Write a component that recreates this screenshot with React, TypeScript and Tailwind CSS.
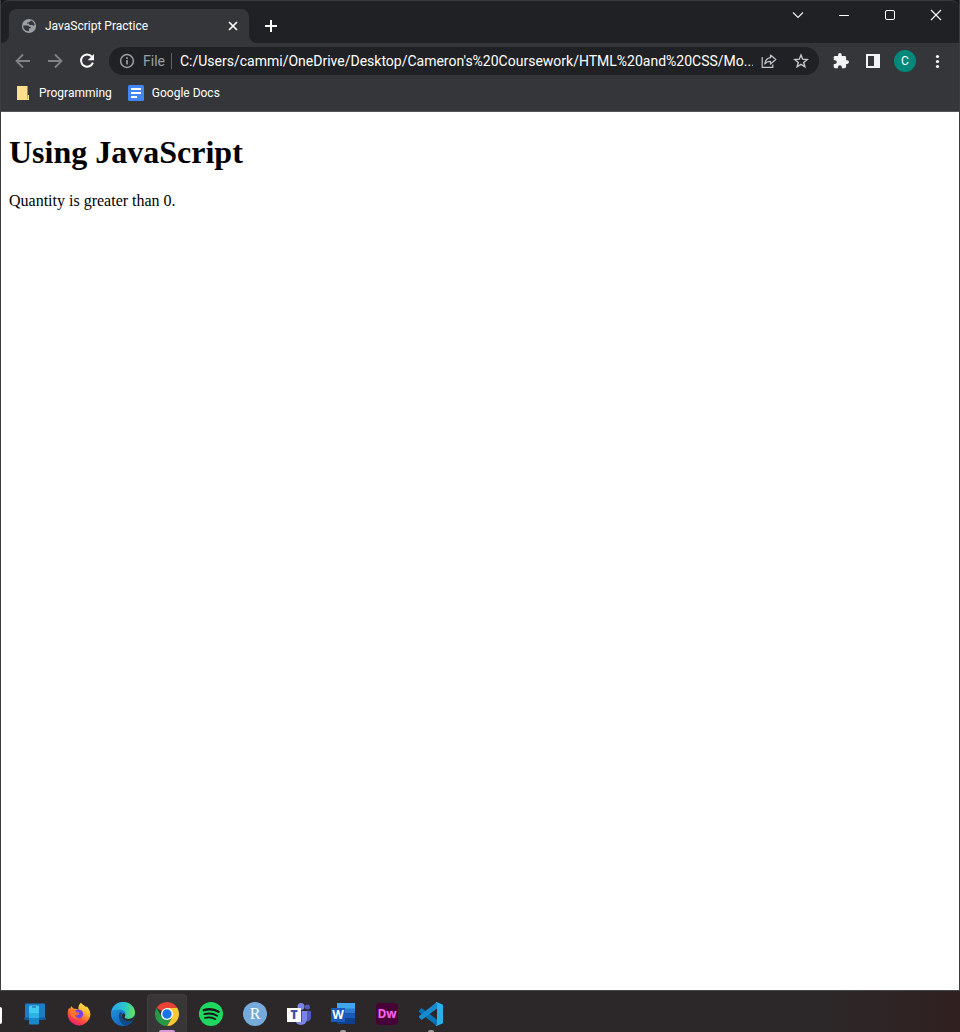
import type { ReactNode } from "react";

function IconButton({ label, className = "w-8 h-8", children }: { label: string; className?: string; children: ReactNode }) {
  return (
    <button type="button" aria-label={label} className={`flex shrink-0 items-center justify-center ${className}`}>
      {children}
    </button>
  );
}

function TabStrip() {
  return (
    <header className="flex h-[43px] items-end rounded-t-lg border-t border-[#3a3b3e] bg-[#202124] text-white">
      <div className="relative ml-2 flex h-[34px] w-60 items-center rounded-t-lg bg-[#35363a] pr-2 pl-3">
        <svg className="absolute bottom-0 -left-2 h-2 w-2" viewBox="0 0 8 8" fill="#35363a">
          <path d="M8 0v8H0a8 8 0 0 0 8-8z" />
        </svg>
        <svg className="absolute -right-2 bottom-0 h-2 w-2" viewBox="0 0 8 8" fill="#35363a">
          <path d="M0 0v8h8a8 8 0 0 1-8-8z" />
        </svg>
        <svg className="h-4 w-4 shrink-0" viewBox="0 0 16 16">
          <circle cx="8" cy="8" r="7.1" fill="#9aa0a6" />
          <path d="M2.300 7.500h3.600c1.300 0 2 .5 2.200 1.300h1.600v1.500H8v2.900C4.500 13.300 1.900 10.800 2.300 7.500z" fill="#35363a" />
          <path d="M10 2.600c2 .8 3.500 2.600 3.700 4.700-.8.6-1.700.5-2.300-.2H9.200C8.300 7 7.800 6.400 7.800 5.600H6V4.400h1.400c1.300-.1 1.700-.8 2.600-1.800z" fill="#35363a" />
        </svg>
        <span className="ml-2 grow truncate text-xs">JavaScript Practice</span>
        <IconButton label="Close tab" className="h-4 w-4">
          <svg className="h-4 w-4" viewBox="0 0 16 16" stroke="#fff" strokeWidth="1.7">
            <path d="M4 4l8 8M12 4l-8 8" />
          </svg>
        </IconButton>
      </div>
      <IconButton label="New tab" className="ml-1.5 h-[34px] w-8">
        <svg className="h-4 w-4" viewBox="0 0 16 16" stroke="#fff" strokeWidth="2">
          <path d="M8 2v12M2 8h12" />
        </svg>
      </IconButton>
      <div className="ml-auto flex self-start">
        <IconButton label="Search tabs" className="h-7 w-[46px]">
          <svg className="h-3 w-3" viewBox="0 0 12 12" fill="none" stroke="#f1f3f4" strokeWidth="1.100">
            <path d="M1 3.500l5 5 5-5" />
          </svg>
        </IconButton>
        <IconButton label="Minimize" className="h-7 w-[46px]">
          <svg className="h-3 w-3" viewBox="0 0 12 12" stroke="#fff">
            <path d="M1 6.500h10" />
          </svg>
        </IconButton>
        <IconButton label="Maximize" className="h-7 w-[46px]">
          <svg className="h-3 w-3" viewBox="0 0 12 12" fill="none" stroke="#fff">
            <rect x="1.500" y="1.500" width="9" height="9" rx="1.500" />
          </svg>
        </IconButton>
        <IconButton label="Close" className="h-7 w-[46px]">
          <svg className="h-3 w-3" viewBox="0 0 12 12" stroke="#fff" strokeWidth="1.100">
            <path d="M1 1l10 10M11 1L1 11" />
          </svg>
        </IconButton>
      </div>
    </header>
  );
}

function Toolbar() {
  return (
    <div className="flex h-9 items-center px-1.5">
      <IconButton label="Back">
        <svg className="h-4 w-4" viewBox="0 0 16 16" fill="none" stroke="#808286" strokeWidth="1.8">
          <path d="M15 8H2M8 1.500L1.500 8 8 14.500" />
        </svg>
      </IconButton>
      <IconButton label="Forward">
        <svg className="h-4 w-4" viewBox="0 0 16 16" fill="none" stroke="#808286" strokeWidth="1.8">
          <path d="M1 8h13M8 1.500L14.500 8 8 14.500" />
        </svg>
      </IconButton>
      <IconButton label="Reload">
        <svg className="h-4 w-4" viewBox="0 0 16 16" fill="none">
          <path d="M12.800 3.600A6.100 6.100 0 1 0 13.900 9.600" stroke="#fff" strokeWidth="2" />
          <path d="M15 1v6.300H8.700z" fill="#fff" />
        </svg>
      </IconButton>
      <div className="mx-1.5 flex h-7 min-w-0 grow items-center rounded-full bg-[#202124] pr-0.5 pl-2.5">
        <svg className="h-4 w-4 shrink-0" viewBox="0 0 16 16" fill="none" stroke="#9aa0a6" strokeWidth="1.500">
          <circle cx="8" cy="8" r="6.400" />
          <path d="M8 7v4.500M8 4.300v1.600" strokeWidth="1.700" />
        </svg>
        <span className="ml-2 w-7 text-sm text-[#9aa0a6]">File</span>
        <span className="h-4 w-px bg-[#5f6368]" />
        <input
          type="text"
          aria-label="Address"
          readOnly
          className="ml-2 min-w-0 grow bg-transparent text-sm text-white outline-none"
          value="C:/Users/cammi/OneDrive/Desktop/Cameron's%20Coursework/HTML%20and%20CSS/Mo..."
        />
        <IconButton label="Share" className="h-7 w-8">
          <svg className="h-4 w-4" viewBox="0 0 16 16" fill="none" stroke="#c4c7cb" strokeWidth="1.200" strokeLinejoin="round">
            <path d="M1.200 4v10.400h10.600V11.500" />
            <path d="M9.500 2l5.300 4.500-5.300 4.500V8.300C7 8.200 5.200 9 3.800 11c.4-3.400 2.400-5.800 5.700-6.300z" />
          </svg>
        </IconButton>
        <IconButton label="Bookmark this page" className="h-7 w-8">
          <svg className="h-4 w-4" viewBox="0 0 16 16" fill="none" stroke="#c4c7cb" strokeWidth="1.400">
            <path d="M8 2l1.700 4.200 4.500.3-3.500 2.900 1.200 4.400L8 11.400l-3.900 2.400 1.200-4.400-3.500-2.900 4.500-.3z" />
          </svg>
        </IconButton>
      </div>
      <IconButton label="Extensions">
        <svg className="h-4 w-4" viewBox="1 1 22 22" fill="#f1f3f4">
          <path d="M20.500 11H19V7a2 2 0 0 0-2-2h-4V3.500a2.500 2.500 0 0 0-5 0V5H4a2 2 0 0 0-2 2v3.800h1.500a2.700 2.700 0 0 1 0 5.400H2V20a2 2 0 0 0 2 2h3.800v-1.500a2.700 2.700 0 0 1 5.400 0V22H17a2 2 0 0 0 2-2v-4h1.500a2.500 2.500 0 0 0 0-5z" />
        </svg>
      </IconButton>
      <IconButton label="Side panel">
        <svg className="h-4 w-4" viewBox="0 0 16 16">
          <path d="M1 1h14v14H1zM3 3v10h6V3z" fill="#f1f3f4" fillRule="evenodd" />
        </svg>
      </IconButton>
      <IconButton label="Profile">
        <span className="flex h-[22px] w-[22px] items-center justify-center rounded-full bg-[#00897b] text-xs text-white">C</span>
      </IconButton>
      <IconButton label="Menu">
        <svg className="h-4 w-4" viewBox="0 0 16 16" fill="#fff">
          <circle cx="8.500" cy="3.500" r="1.600" />
          <circle cx="8.500" cy="8.500" r="1.600" />
          <circle cx="8.500" cy="13.500" r="1.600" />
        </svg>
      </IconButton>
    </div>
  );
}

function Bookmarks() {
  return (
    <nav aria-label="Bookmarks" className="flex h-8 items-start gap-4 pt-1 pl-3.5 text-xs leading-5 text-white">
      <a href="#programming" className="flex items-center gap-2">
        <svg className="h-4 w-4" viewBox="0 0 16 16">
          <path d="M2 1h10.500v9H14v5H2z" fill="#ffe08a" />
          <path d="M12.500 10v4" stroke="#d9a93c" fill="none" />
        </svg>
        Programming
      </a>
      <a href="#docs" className="flex items-center gap-2">
        <svg className="h-4 w-4" viewBox="0 0 16 16">
          <rect width="16" height="16" rx="1.500" fill="#4285f4" />
          <path d="M3 4h10M3 8h10M3 12h6" stroke="#fff" strokeWidth="1.900" />
        </svg>
        Google Docs
      </a>
    </nav>
  );
}

function PhoneLinkIcon() {
  return (
    <svg className="h-6 w-6" viewBox="0 0 24 24">
      <rect x="2" y="1.500" width="20" height="15" rx="1" fill="#1c7cc4" />
      <path d="M1 15.500h22V17l-1 1H2l-1-1z" fill="#115c9c" />
      <rect x="6" y="3.500" width="10" height="19" rx="1" fill="#1688cd" />
      <path d="M6 4.500a1 1 0 0 1 1-1h8a1 1 0 0 1 1 1V11H6z" fill="#42caf0" />
      <path d="M6 11h10v5H6z" fill="#2bb1e3" />
      <path d="M9 5h4" stroke="#135b91" />
    </svg>
  );
}

function FirefoxIcon() {
  return (
    <svg className="h-6 w-6" viewBox="0 0 24 24">
      <defs>
        <linearGradient id="fx" x1=".8" y1="0" x2=".25" y2="1">
          <stop offset="0" stopColor="#fff14f" />
          <stop offset=".35" stopColor="#ffb52e" />
          <stop offset=".65" stopColor="#ff5836" />
          <stop offset="1" stopColor="#ee1275" />
        </linearGradient>
      </defs>
      <path d="M14 .7c1 1.800 3.800 2.700 5 4.600l.7-1C22.300 7.300 23.600 10 23.300 13A11.300 11.300 0 0 1 .8 13.300C.4 10.500 1 8.100 2 6l1.100 1L4.300 4l2 2.500c2.500.1 4.300.5 5.400 1.500C10.800 4.800 12 2.300 14 .7z" fill="url(#fx)" />
      <path d="M8 8.500c2-1.500 5-1.500 6.800.2 2.500 2.400 1.700 6.400-1.500 7.400-2.600.8-5.100-.7-5.700-2.800 1.700.6 3.200 0 4.200-1.600-1.700 0-3.200-1.200-3.800-3.200z" fill="#7542e5" />
      <path d="M2.500 9c2-1.500 4.200-1.600 5.900.3 1 1.300 2.600 1 4 1.400-1 2.300-3.100 2.500-4.800 2.400.8 1.800 2.300 2.900 4.600 3C7.500 18 3.500 15 2.500 9z" fill="#ff752b" />
    </svg>
  );
}

function EdgeIcon() {
  return (
    <svg className="h-6 w-6" viewBox="0 0 24 24">
      <defs>
        <linearGradient id="edgeTop" x1="0" y1=".4" x2="1" y2=".5">
          <stop offset="0" stopColor="#2aa4ed" />
          <stop offset=".55" stopColor="#2bc5ca" />
          <stop offset="1" stopColor="#66e35b" />
        </linearGradient>
        <linearGradient id="edgeLeft" x1="0" y1="0" x2=".7" y2="1">
          <stop offset="0" stopColor="#249de5" />
          <stop offset="1" stopColor="#105fb4" />
        </linearGradient>
      </defs>
      <circle cx="12" cy="12" r="12" fill="url(#edgeLeft)" />
      <path d="M.3 9.500C2 3 6.600 0 12 0c7 0 12 5 12 10.500 0 4-3 6.500-6.600 6.500-2.700 0-4.400-1-3.700-2.200 2.300-3.500-.5-7.300-5-7.300-3.700 0-6.800.2-8.400 2z" fill="url(#edgeTop)" />
      <path d="M9 10c-3 4.500 0 12.500 6.300 13.500C18.500 22.600 21 20.600 22.200 18c-3 1.800-8 1.400-10.200-.9-1.800-1.800-2-4.300-.8-6.100z" fill="#114a8b" />
      <path d="M12.500 11.300c1.500.5 2 2 1.200 3.500-.7 1.200 1 2.200 3.700 2.200 2.800 0 5.200-1.500 6.200-3.700-.2 1.700-.7 3.300-1.400 4.700-3 1.800-8 1.400-10.200-.9-1.800-1.800-1.500-4.700.5-5.800z" fill="#2d2a2a" />
    </svg>
  );
}

function ChromeIcon() {
  return (
    <svg className="h-6 w-6" viewBox="0 0 24 24">
      <path d="M12 12L1.610 6A12 12 0 0 1 22.390 6z" fill="#ea4335" />
      <path d="M12 6h10.390A12 12 0 0 1 12 24l5.200-9z" fill="#fcc934" />
      <path d="M6.800 15L1.610 6A12 12 0 0 0 12 24l5.200-9z" fill="#279847" />
      <circle cx="12" cy="12" r="6" fill="#fff" />
      <circle cx="12" cy="12" r="4.700" fill="#1a73e8" />
    </svg>
  );
}

function SpotifyIcon() {
  return (
    <svg className="h-6 w-6" viewBox="0 0 24 24">
      <circle cx="12" cy="12" r="12" fill="#1ed760" />
      <path d="M4.800 8.200c5-1.500 10.500-1 14.800 1.500" stroke="#191414" strokeWidth="2.300" fill="none" strokeLinecap="round" />
      <path d="M5.400 12.200c4.300-1.300 9-.7 12.700 1.500" stroke="#191414" strokeWidth="1.900" fill="none" strokeLinecap="round" />
      <path d="M5.800 15.900c3.800-1 7.600-.6 10.700 1.300" stroke="#191414" strokeWidth="1.600" fill="none" strokeLinecap="round" />
    </svg>
  );
}

function TeamsIcon() {
  return (
    <span className="relative flex h-6 w-6 items-center font-['Open_Sans',sans-serif]">
      <svg className="h-6 w-6" viewBox="0 0 24 24">
        <circle cx="20.500" cy="5" r="2.500" fill="#5159c3" />
        <circle cx="14" cy="4.500" r="3.500" fill="#7b83eb" />
        <path d="M17 9h7v6.500a4 4 0 0 1-7 2.500z" fill="#5159c3" />
        <path d="M8 9h12v8a6 6 0 0 1-12 0z" fill="#7b83eb" />
        <path d="M8 9h7v11H8z" fill="#454ab3" />
      </svg>
      <span className="absolute top-1.5 left-0 flex h-3.5 w-3.5 items-center justify-center bg-white text-xs font-extrabold text-[#444da8]">T</span>
    </span>
  );
}

function WordIcon() {
  return (
    <span className="relative flex h-6 w-6 items-center font-['Open_Sans',sans-serif]">
      <svg className="h-6 w-6" viewBox="0 0 24 24">
        <path d="M6 1h18v6H6z" fill="#41a5ee" />
        <path d="M6 6.500h18v5H6z" fill="#2b7cd3" />
        <path d="M6 11.500h18v5H6z" fill="#185abd" />
        <path d="M6 16.500h18V22H6z" fill="#103f91" />
      </svg>
      <span className="absolute top-1.5 left-0 flex h-3.5 w-3.5 items-center justify-center bg-[#185abd] text-xs font-bold text-white">W</span>
    </span>
  );
}

function VsCodeIcon() {
  return (
    <svg className="h-6 w-6" viewBox="0 0 24 24">
      <path d="M0 8.600L2.700 6 18 17.600V24L0 10z" fill="#0874b8" />
      <path d="M0 15.400L2.700 18 18 6.400V0L0 14z" fill="#168bd0" />
      <path d="M17.500 0L24 2.800v18.400L17.500 24l-1-1c.8.2 1.500-.3 1.500-1V2c0-.8-.7-1.200-1.500-1z" fill="#2caee8" />
    </svg>
  );
}

type TaskItem = { name: string; icon: ReactNode; open?: boolean; active?: boolean };

const tasks: TaskItem[] = [
  { name: "Phone Link", icon: <PhoneLinkIcon /> },
  { name: "Firefox", icon: <FirefoxIcon /> },
  { name: "Edge", icon: <EdgeIcon /> },
  { name: "Chrome", icon: <ChromeIcon />, active: true },
  { name: "Spotify", icon: <SpotifyIcon /> },
  {
    name: "RStudio",
    icon: <span className="flex h-6 w-6 items-center justify-center rounded-full bg-[#75aadb] font-['Liberation_Serif',serif] text-base leading-6 text-white">R</span>,
  },
  { name: "Teams", icon: <TeamsIcon /> },
  { name: "Word", icon: <WordIcon />, open: true },
  {
    name: "Dreamweaver",
    icon: <span className="flex h-[22px] w-[22px] items-center justify-center rounded bg-[#470137] font-['Open_Sans',sans-serif] text-xs font-bold text-[#ff61f6]">Dw</span>,
  },
  { name: "Visual Studio Code", icon: <VsCodeIcon />, open: true },
];

function Taskbar() {
  return (
    <footer className="flex h-[42px] items-end border-t border-[#45484a] bg-linear-to-r from-[#2c2829] from-85% to-[#302020]">
      <span className="mb-2 h-[17px] w-0.5 rounded-r-sm bg-white" />
      <div className="flex pl-[11px]">
        {tasks.map((task) => (
          <button
            key={task.name}
            type="button"
            aria-label={task.name}
            className="relative flex h-[38px] w-11 justify-center pt-2"
          >
            {task.active && (
              <span className="absolute inset-x-0.5 inset-y-0 flex items-end justify-center rounded-t border border-b-0 border-[#403d3e] bg-[#393637]">
                <span className="h-0.5 w-4 rounded-t bg-[#d49bd8]" />
              </span>
            )}
            <span className="relative flex h-6 items-center">{task.icon}</span>
            {task.open && (
              <span className="absolute inset-x-0 bottom-0 flex justify-center">
                <span className="h-0.5 w-1.5 rounded-t bg-[#a09b9b]" />
              </span>
            )}
          </button>
        ))}
      </div>
    </footer>
  );
}

export default function App() {
  return (
    <div className="flex min-h-screen flex-col bg-[#17181b] font-['Roboto','Noto_Sans',sans-serif]">
      <div className="flex grow flex-col border-x border-[#3c3d40]">
        <TabStrip />
        <div className="border-b border-[#55565a] bg-[#35363a]">
          <Toolbar />
          <Bookmarks />
        </div>
        <main className="grow bg-white px-2 pt-[22px] font-['Liberation_Serif',serif] text-black">
          <h1 className="text-[32px] leading-9 font-bold">Using JavaScript</h1>
          <p className="mt-[22px] text-base leading-[18px]">Quantity is greater than 0.</p>
        </main>
      </div>
      <Taskbar />
    </div>
  );
}
